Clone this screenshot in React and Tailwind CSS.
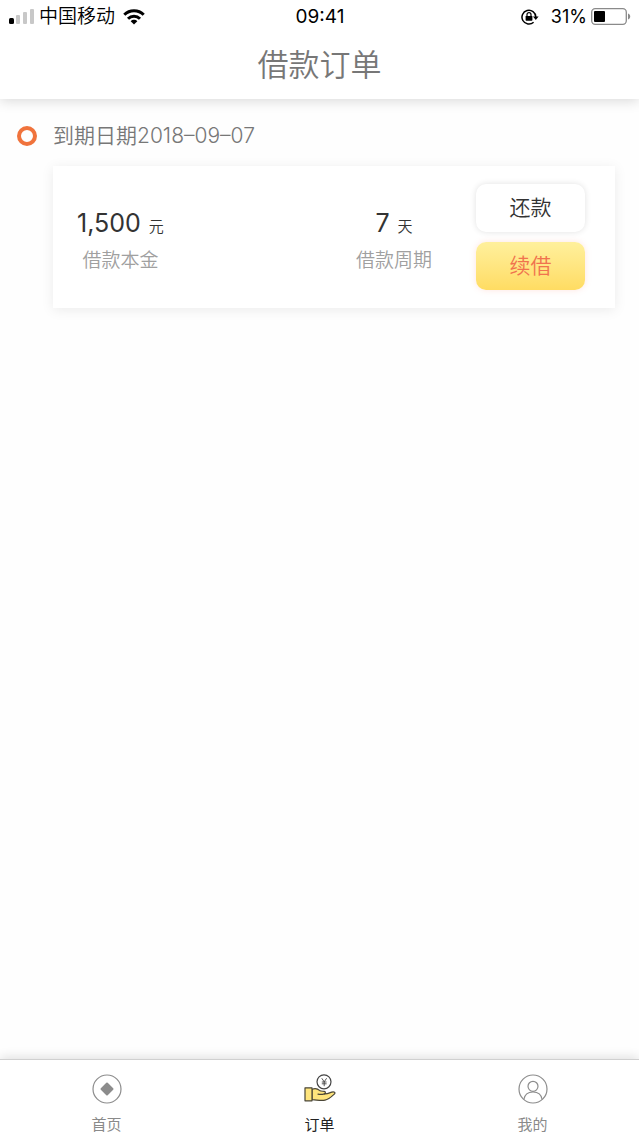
import { useState } from "react";

const orders = [
	{
		id: "order-1",
		dueDate: "2018–09–07",
		principal: "1,500",
		days: "7",
	},
];

const SignalIcon = () => (
	<svg width="26" height="16" viewBox="0 0 26 16" aria-hidden="true">
		<rect x="0" y="9" width="5" height="6" rx="1.5" fill="#000" />
		<rect x="7" y="6" width="4" height="9" rx="1" fill="#c8c8c8" />
		<rect x="14" y="3" width="4" height="12" rx="1" fill="#c8c8c8" />
		<rect x="21" y="0" width="4" height="15" rx="1" fill="#c8c8c8" />
	</svg>
);

const WifiIcon = () => (
	<svg width="22" height="16" viewBox="0 0 22 16" fill="none" stroke="#000" strokeWidth="3" aria-hidden="true">
		<path d="M1.3 5.8C6.6 0.4 15.4 0.4 20.7 5.8" />
		<path d="M5 9.7c3.3-3.3 8.7-3.3 12 0" />
		<path d="M11 15.6l-3.3-3.4c1.8-1.8 4.8-1.8 6.6 0z" fill="#000" stroke="none" />
	</svg>
);

const RotationLockIcon = () => (
	<svg width="18" height="16" viewBox="0 0 18 16" fill="none" stroke="#000" strokeWidth="1.5" aria-hidden="true">
		<path d="M12.6 13.2A6.9 6.9 0 1 1 14.8 8" />
		<path d="M12 7.6h5.6L14.8 11z" fill="#000" stroke="none" />
		<rect x="4.6" y="6.9" width="6.8" height="4.8" rx="0.6" fill="#000" stroke="none" />
		<path d="M6 7V5.6a2 2 0 0 1 4 0V7" strokeWidth="1.2" />
	</svg>
);

const BatteryIcon = () => (
	<svg width="40" height="18" viewBox="0 0 40 18" aria-hidden="true">
		<rect x="0.7" y="0.7" width="34.6" height="15.6" rx="3.5" fill="none" stroke="#8a8a8a" strokeWidth="1.3" />
		<rect x="3" y="3" width="11" height="11" rx="1" fill="#000" />
		<path d="M37 5.5v6c1.6-.6 2.2-1.7 2.2-3s-.6-2.4-2.2-3z" fill="#8a8a8a" />
	</svg>
);

const HomeIcon = () => (
	<svg width="32" height="32" viewBox="0 0 32 32" fill="none" aria-hidden="true">
		<circle cx="16" cy="16" r="14" stroke="#8c8c8c" strokeWidth="1.2" />
		<path d="M16 10.5l5.5 5.5-5.5 5.5-5.5-5.5z" fill="#8c8c8c" stroke="#8c8c8c" strokeWidth="2" strokeLinejoin="round" />
	</svg>
);

const OrderIcon = () => (
	<svg width="32" height="32" viewBox="0 0 32 32" fill="none" strokeLinecap="round" strokeLinejoin="round" aria-hidden="true">
		<circle cx="20" cy="8.8" r="7" stroke="#444" strokeWidth="1.2" />
		<path d="M18 5.6l2.2 3.2 2.2-3.2M20.2 8.8v4M18.2 9h4M18.2 10.8h4" stroke="#444" strokeWidth="0.9" />
		<path
			d="M8 16.2c3-1.1 5.5-.7 7.500 1.200 1.600 1 3.300.7 4.800 1 1.400.3 1.400 2 .2 2.500 3 .4 4.700-1 7.300-1.800 2.400-.7 4 .4 2.600 1.900-2.400 2.200-5.400 5.500-9.400 6.200-4.500.8-8.500-.4-13-.5z"
			fill="#ffe57c"
			stroke="#4a4637"
			strokeWidth="1.2"
		/>
		<path d="M14 21.2c2.200.4 4.500.2 6.500-.3" stroke="#4a4637" strokeWidth="1.2" />
		<path d="M1 14.8h7v13H1z" fill="#ffe57c" stroke="#4a4637" strokeWidth="1.2" />
	</svg>
);

const ProfileIcon = () => (
	<svg width="32" height="32" viewBox="0 0 32 32" fill="none" stroke="#8c8c8c" strokeWidth="1.2" aria-hidden="true">
		<circle cx="16" cy="16" r="14" />
		<circle cx="16" cy="13.3" r="5" />
		<path d="M6.8 26.5c.8-4.8 4.5-7.5 9.2-7.5s8.4 2.7 9.2 7.5" />
	</svg>
);

const tabs = [
	{ id: "home", label: "首页", Icon: HomeIcon },
	{ id: "orders", label: "订单", Icon: OrderIcon },
	{ id: "mine", label: "我的", Icon: ProfileIcon },
];

const Amount = ({ value, unit, label }) => (
	<dl className="flex flex-col-reverse items-center pt-2">
		<dt className="text-[19px] leading-7 font-[350] text-[#a0a0a0]">{label}</dt>
		<dd className="mb-1 flex items-baseline gap-2 leading-8 text-[#333333]">
			<span className="text-[25px]">{value}</span>
			<span className="text-[15px] font-[350]">{unit}</span>
		</dd>
	</dl>
);

const OrderItem = ({ order }) => (
	<li className="flex items-start gap-4">
		<span className="mt-2 size-5 shrink-0 rounded-full border-4 border-[#f0733c]"></span>
		<div className="flex-1">
			<h2 className="text-[21px] leading-9 font-[350] text-[#777777]">到期日期{order.dueDate}</h2>
			<div className="mt-3 flex items-center justify-between bg-white py-[18px] pr-[30px] pl-6 shadow-[0_2px_12px_rgba(0,0,0,0.08)]">
				<Amount value={order.principal} unit="元" label="借款本金" />
				<div className="flex items-center gap-11">
					<Amount value={order.days} unit="天" label="借款周期" />
					<div className="flex w-[109px] flex-col gap-[10px]">
						<button
							type="button"
							className="h-12 rounded-[10px] bg-white text-[21px] font-[350] text-[#333333] shadow-[0_0_6px_rgba(0,0,0,0.12)]"
						>
							还款
						</button>
						<button
							type="button"
							className="h-12 rounded-[10px] bg-linear-to-b from-[#fff09c] to-[#ffdc62] text-[21px] font-[350] text-[#f0734e] shadow-[0_0_6px_rgba(255,150,130,0.25)]"
						>
							续借
						</button>
					</div>
				</div>
			</div>
		</div>
	</li>
);

function App() {
	const [activeTab, setActiveTab] = useState("orders");

	return (
		<div className="flex min-h-screen flex-col bg-[#fefefe] font-[Inter,'Noto_Sans_CJK_SC',sans-serif]">
			<header className="bg-white shadow-[0_2px_12px_rgba(0,0,0,0.15)]">
				<div className="grid grid-cols-3 items-center pr-2 pl-[9px] text-[19px] leading-[34px] text-black">
					<div className="flex items-center gap-1">
						<SignalIcon />
						<span className="font-[350]">中国移动</span>
						<span className="ml-1">
							<WifiIcon />
						</span>
					</div>
					<time className="text-center">09:41</time>
					<div className="flex items-center justify-end gap-1">
						<span className="mr-2">
							<RotationLockIcon />
						</span>
						<span className="text-lg leading-8">31%</span>
						<BatteryIcon />
					</div>
				</div>
				<h1 className="pb-[3px] text-center text-[31px] leading-[62px] font-[350] text-[#777777]">借款订单</h1>
			</header>

			<main className="flex-1 pt-[19px] pr-6 pl-[17px]">
				<ul>
					{orders.map((order) => (
						<OrderItem key={order.id} order={order} />
					))}
				</ul>
			</main>

			<nav className="grid grid-cols-3 border-t border-[#d0d0d0] bg-white pt-[13px] shadow-[0_-2px_10px_rgba(0,0,0,0.12)]">
				{tabs.map(({ id, label, Icon }) => (
					<button
						key={id}
						type="button"
						onClick={() => setActiveTab(id)}
						className={"flex flex-col items-center gap-[9px] text-[15px] leading-[22px] " + (id === activeTab ? "text-[#222222]" : "text-[#8a8a8a]")}
					>
						<Icon />
						{label}
					</button>
				))}
			</nav>
		</div>
	);
}

export default App;
